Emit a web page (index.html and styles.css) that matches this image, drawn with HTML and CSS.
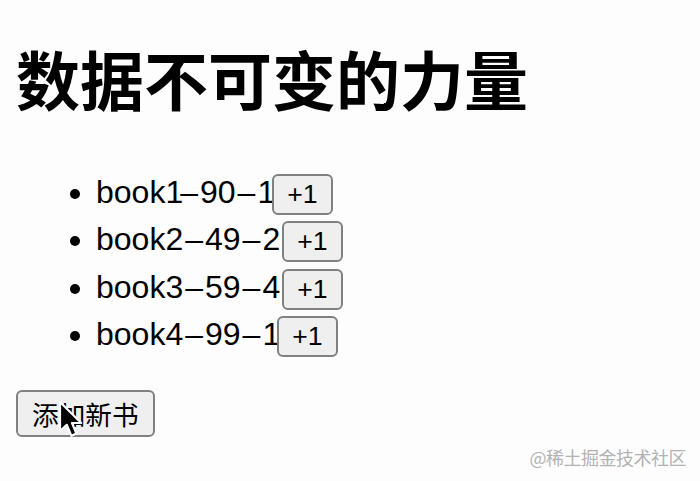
FILE: index.html
```html
<!DOCTYPE html>
<html lang="zh">
<head>
<meta charset="utf-8">
<title>数据不可变的力量</title>
<link rel="stylesheet" href="styles.css">
</head>
<body>
<div class="app">
  <h1 class="title">数据不可变的力量</h1>
  <ul class="books">
    <li class="book">book<span class="one">1</span><span class="sep">–</span>90<span class="sep">–</span><span class="one">1</span><button class="btn">+1</button></li>
    <li class="book">book2<span class="sep">–</span>49<span class="sep">–</span>2<button class="btn">+1</button></li>
    <li class="book">book3<span class="sep">–</span>59<span class="sep">–</span>4<button class="btn">+1</button></li>
    <li class="book">book4<span class="sep">–</span>99<span class="sep">–</span><span class="one">1</span><button class="btn">+1</button></li>
  </ul>
  <button class="btn btn-add">添加新书</button>
</div>
<svg class="cursor" width="26" height="40" viewBox="0 0 13 20" aria-hidden="true">
  <path d="M1 1 L1 15.5 L4.4 12.4 L6.7 17.9 L9.2 16.8 L7 11.5 L11.6 11.5 Z" fill="#000" stroke="#fff" stroke-width="1.1" stroke-linejoin="round"/>
</svg>
<div class="watermark">@稀土掘金技术社区</div>
</body>
</html>
```

FILE: styles.css
```css
html, body {
  background: #fdfdfd;
}
body {
  margin: 0;
  font-family: "Liberation Sans", Arial, "Noto Sans CJK SC", sans-serif;
  color: #000;
}
.app {
  padding: 1px 16px 0;
}
.title {
  font-family: "Noto Sans CJK SC", "Liberation Sans", sans-serif;
  font-size: 64px;
  font-weight: 700;
  line-height: 70px;
  margin: 41px 0 57px;
}
.books {
  margin: 0 0 32px;
  padding-left: 80px;
  font-size: 32px;
  line-height: 47.3px;
}
.sep {
  margin: 0 2px;
}
.one {
  letter-spacing: -5px;
}
.btn {
  font-family: "Liberation Sans", Arial, "Noto Sans CJK SC", sans-serif;
  font-size: 26.67px;
  line-height: 33px;
  padding: 2px 13px;
  border: 2px solid #808080;
  border-radius: 6px;
  background: #efefef;
  color: #000;
  vertical-align: baseline;
  margin: 0 0 0 2px;
}
.btn-add {
  font-family: "Noto Sans CJK SC", sans-serif;
  line-height: 39px;
  padding: 2px 14px;
  margin: 0;
}
.cursor {
  position: absolute;
  left: 58px;
  top: 400px;
}
.watermark {
  position: absolute;
  right: 14px;
  top: 444px;
  font-family: "Noto Sans CJK SC", sans-serif;
  font-size: 18px;
  color: #b3b3b3;
  letter-spacing: -0.5px;
}
```
